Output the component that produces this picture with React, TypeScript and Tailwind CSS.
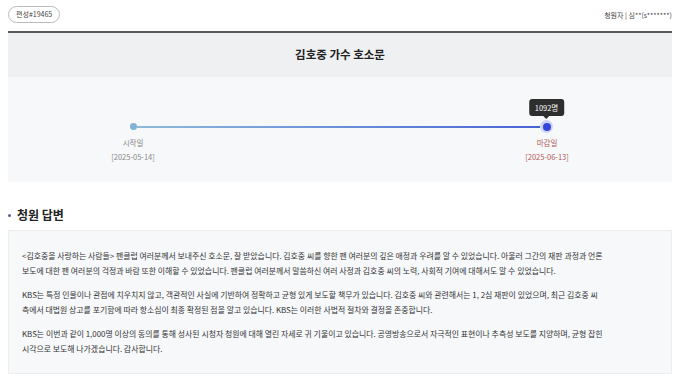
export default function App() {
  return (
    <div className="w-[680px] h-[378px] overflow-hidden bg-white px-2 font-['Noto_Sans_CJK_KR','Noto_Sans',sans-serif] text-[#333]">
      {/* top meta row */}
      <div className="flex h-[31px] items-start justify-between pt-[6px]">
        <span className="flex h-[17px] items-center rounded-full border border-[#bbb] px-[7px] text-[7px] text-[#444]">
          편성#19465
        </span>
        <span className="mt-[4px] text-[7px] text-[#444]">청원자 | 심**(s*******)</span>
      </div>

      <div className="border-t-2 border-[#5a5a5a]" />

      <div className="flex h-[44px] items-center justify-center bg-[#eff0f2]">
        <h1 className="text-[11.5px] font-bold text-[#222]">김호중 가수 호소문</h1>
      </div>

      {/* timeline */}
      <div className="h-[105px] bg-[#f7f8fa] pt-[43px]">
        <div className="ml-[122px] w-[420px]">
          <div className="flex items-center">
            <span className="h-[7px] w-[7px] rounded-full bg-[#7fb2d6]" />
            <span className="h-[2px] flex-1 bg-gradient-to-r from-[#8dbbd9] to-[#4a63d6]" />
            <span className="relative flex h-[13px] w-[13px] -mr-[3px] items-center justify-center rounded-full bg-[#cdd4f7]">
              <span className="h-[8px] w-[8px] rounded-full bg-[#3547d9]" />
              <span className="absolute bottom-[17px] left-1/2 -translate-x-1/2 whitespace-nowrap rounded-[3px] bg-[#2e2e2e] px-[6px] py-[3px] text-[7.5px] leading-[11px] text-white">
                1092명
                <span className="absolute left-1/2 top-full -translate-x-1/2 border-x-[3px] border-t-[3px] border-x-transparent border-t-[#2e2e2e]" />
              </span>
            </span>
          </div>
          <div className="mt-[3px] flex justify-between">
            <div className="ml-[3px] flex w-0 flex-col items-center whitespace-nowrap text-[7.5px] leading-[14px] text-[#888]">
              <span>시작일</span>
              <span>[2025-05-14]</span>
            </div>
            <div className="mr-[3px] flex w-0 flex-col items-center whitespace-nowrap text-[7.5px] leading-[14px] text-[#b55a5a]">
              <span>마감일</span>
              <span>[2025-06-13]</span>
            </div>
          </div>
        </div>
      </div>

      {/* answer */}
      <div className="mt-[24px] flex items-center gap-[6px]">
        <span className="h-[3px] w-[3px] rounded-full bg-[#5b5ba5]" />
        <h2 className="text-[12px] font-bold text-[#222]">청원 답변</h2>
      </div>

      <div className="mt-[6px] h-[144px] border border-[#ededed] bg-[#f7f8fa] px-[13px] pt-[17px] text-[7.9px] leading-[15px] text-[#333] whitespace-nowrap">
        <p>
          &lt;김호중을 사랑하는 사람들&gt; 팬클럽 여러분께서 보내주신 호소문, 잘 받았습니다. 김호중 씨를 향한 팬 여러분의 깊은 애정과 우려를 알 수 있었습니다. 아울러 그간의 재판 과정과 언론
          <br />
          보도에 대한 팬 여러분의 걱정과 바람 또한 이해할 수 있었습니다. 팬클럽 여러분께서 말씀하신 여러 사정과 김호중 씨의 노력, 사회적 기여에 대해서도 알 수 있었습니다.
        </p>
        <p className="mt-[9px]">
          KBS는 특정 인물이나 관점에 치우치지 않고, 객관적인 사실에 기반하여 정확하고 균형 있게 보도할 책무가 있습니다. 김호중 씨와 관련해서는 1, 2심 재판이 있었으며, 최근 김호중 씨
          <br />
          측에서 대법원 상고를 포기함에 따라 항소심이 최종 확정된 점을 알고 있습니다. KBS는 이러한 사법적 절차와 결정을 존중합니다.
        </p>
        <p className="mt-[9px]">
          KBS는 이번과 같이 1,000명 이상의 동의를 통해 성사된 시청자 청원에 대해 열린 자세로 귀 기울이고 있습니다. 공영방송으로서 자극적인 표현이나 추측성 보도를 지양하며, 균형 잡힌
          <br />
          시각으로 보도해 나가겠습니다. 감사합니다.
        </p>
      </div>
    </div>
  );
}
